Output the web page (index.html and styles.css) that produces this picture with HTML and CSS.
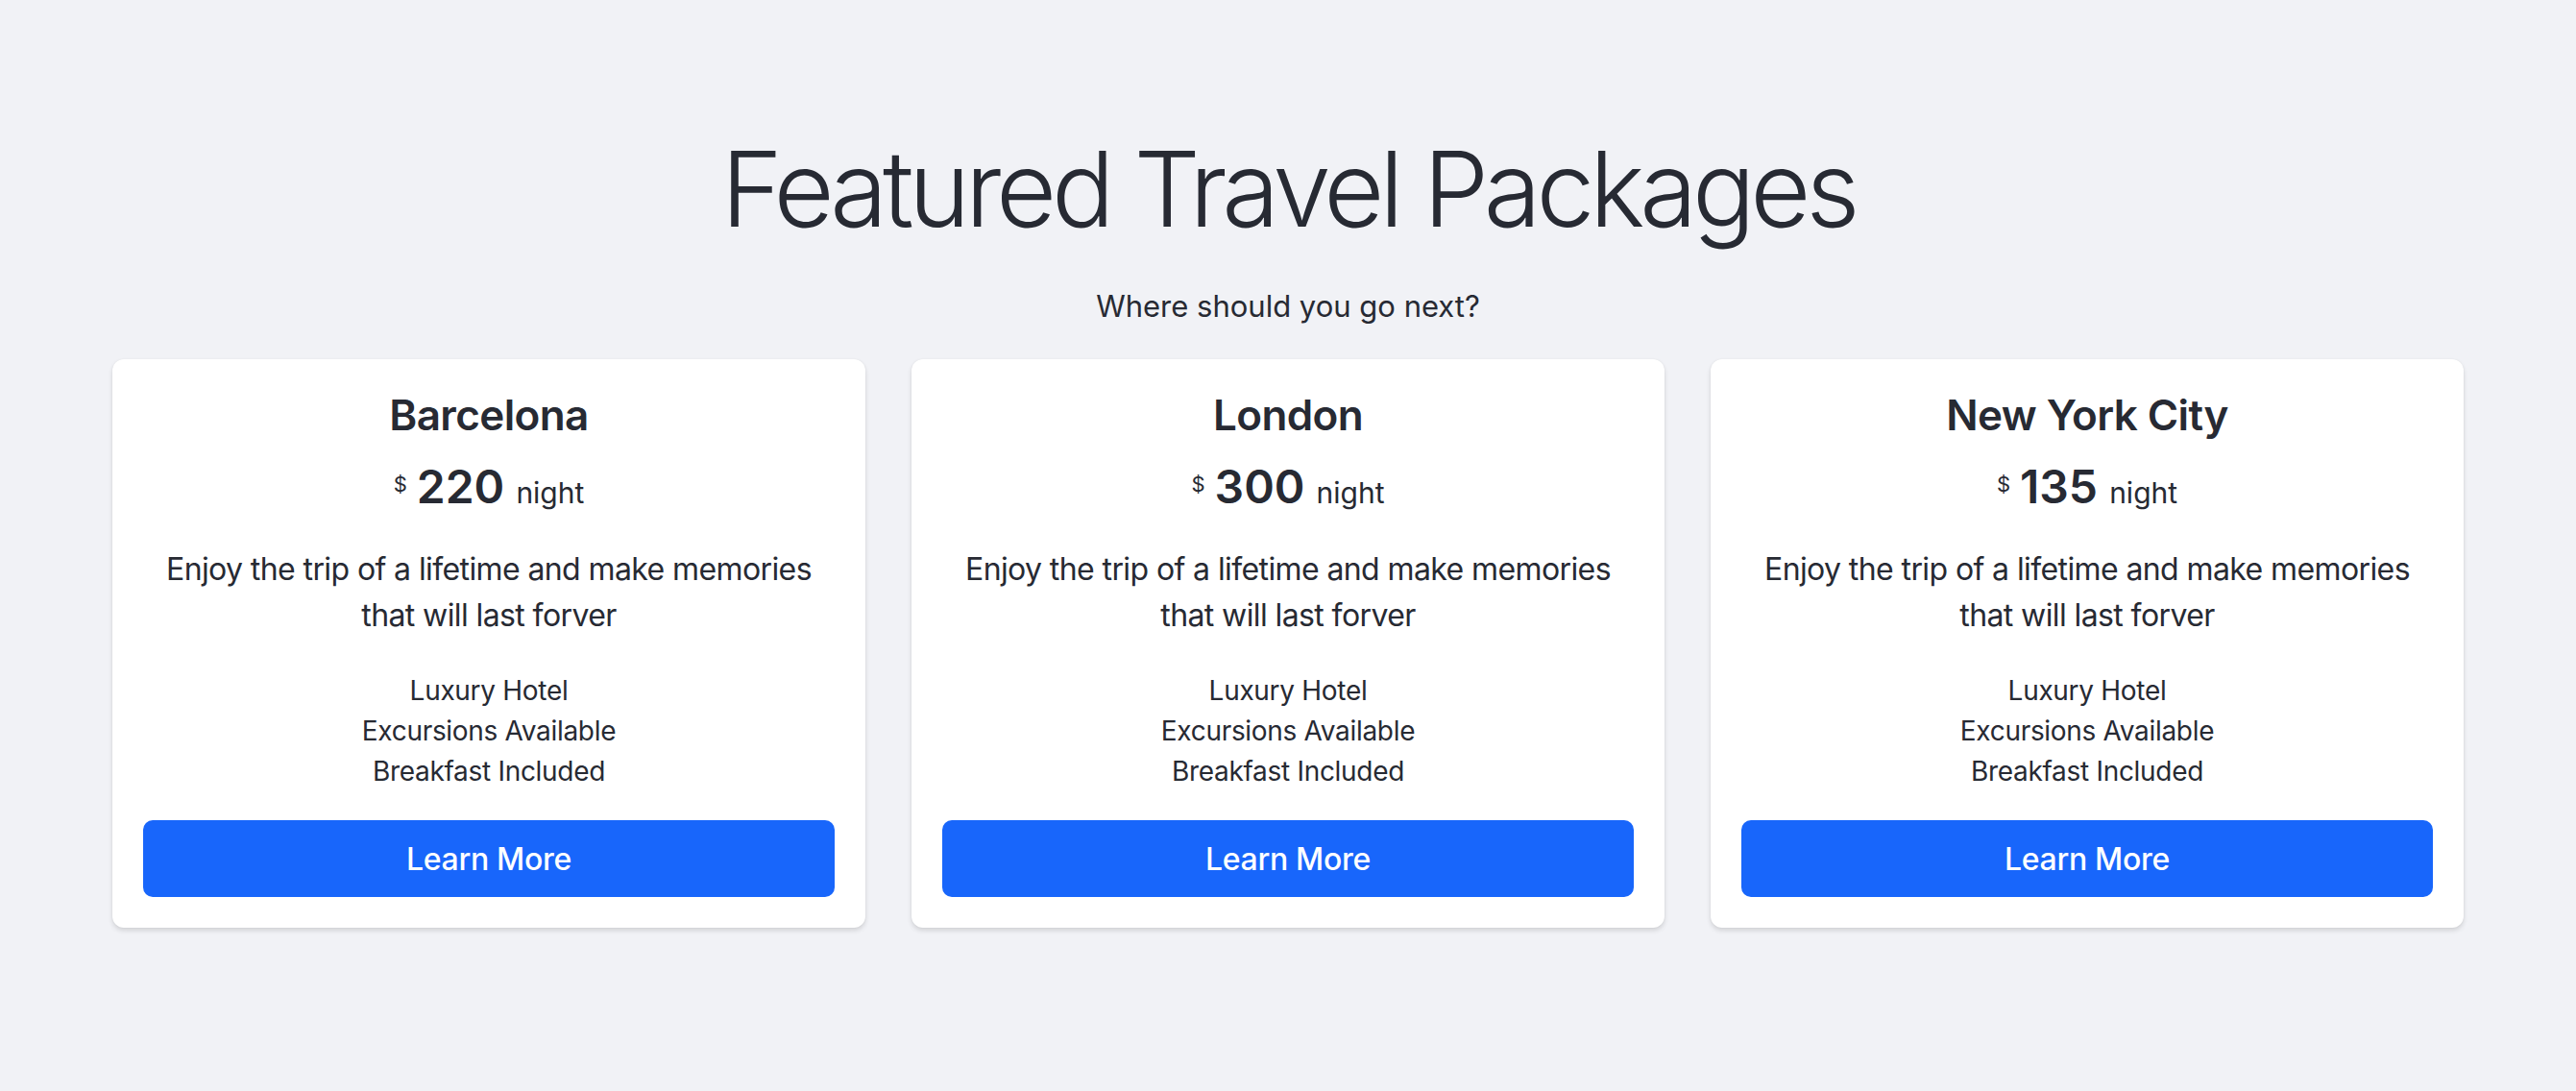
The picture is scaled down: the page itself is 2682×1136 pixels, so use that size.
FILE: index.html
```html
<!DOCTYPE html>
<html lang="en">
<head>
<meta charset="utf-8">
<title>Featured Travel Packages</title>
<link rel="stylesheet" href="styles.css">
</head>
<body>
<main class="page">
  <header class="intro">
    <h1 class="title">Featured Travel Packages</h1>
    <p class="lead">Where should you go next?</p>
  </header>
  <section class="cards">
    <article class="card">
      <h2 class="card-title">Barcelona</h2>
      <p class="price"><span class="cur">$</span>220 <span class="unit">night</span></p>
      <p class="desc">Enjoy the trip of a lifetime and make memories that will last forver</p>
      <ul class="features">
        <li>Luxury Hotel</li>
        <li>Excursions Available</li>
        <li>Breakfast Included</li>
      </ul>
      <button class="btn" type="button">Learn More</button>
    </article>
    <article class="card">
      <h2 class="card-title">London</h2>
      <p class="price"><span class="cur">$</span>300 <span class="unit">night</span></p>
      <p class="desc">Enjoy the trip of a lifetime and make memories that will last forver</p>
      <ul class="features">
        <li>Luxury Hotel</li>
        <li>Excursions Available</li>
        <li>Breakfast Included</li>
      </ul>
      <button class="btn" type="button">Learn More</button>
    </article>
    <article class="card">
      <h2 class="card-title">New York City</h2>
      <p class="price"><span class="cur">$</span>135 <span class="unit">night</span></p>
      <p class="desc">Enjoy the trip of a lifetime and make memories that will last forver</p>
      <ul class="features">
        <li>Luxury Hotel</li>
        <li>Excursions Available</li>
        <li>Breakfast Included</li>
      </ul>
      <button class="btn" type="button">Learn More</button>
    </article>
  </section>
</main>
</body>
</html>
```
FILE: styles.css
```css
* { box-sizing: border-box; }
html, body {
  margin: 0;
  padding: 0;
  background: #f1f2f6;
}
body {
  font-family: Inter, "Noto Sans", "Liberation Sans", sans-serif;
  color: #272a33;
  min-height: 1136px;
}
.page {
  width: 2448px;
  margin: 0 auto;
  padding-top: 131px;
}
.intro { text-align: center; }
.title {
  margin: 0;
  font-size: 109px;
  line-height: 131px;
  font-weight: 300;
  letter-spacing: -5.3px;
}
.lead {
  margin: 34px 0 0;
  font-size: 31px;
  line-height: 46px;
  font-weight: 400;
}
.cards {
  display: grid;
  grid-template-columns: repeat(3, 1fr);
  gap: 48px;
  margin-top: 32px;
}
.card {
  background: #fff;
  border-radius: 12px;
  box-shadow: 0 3px 5px rgba(0, 0, 0, 0.13), 0 0 2px rgba(0, 0, 0, 0.06);
  padding: 32px;
  text-align: center;
  display: flex;
  flex-direction: column;
}
.card-title {
  margin: 0;
  font-size: 44px;
  line-height: 53px;
  font-weight: 600;
  letter-spacing: -0.6px;
}
.price {
  margin: 16px 0 0;
  font-size: 48px;
  line-height: 58px;
  font-weight: 600;
}
.cur {
  font-size: 22px;
  font-weight: 400;
  vertical-align: 12px;
  margin-right: 10px;
}
.unit {
  font-size: 30px;
  font-weight: 400;
}
.desc {
  margin: 27px 0 0;
  padding: 0 18px;
  font-size: 32px;
  line-height: 48px;
  letter-spacing: -0.6px;
}
.features {
  list-style: none;
  margin: 33px 0 0;
  padding: 0;
  font-size: 28px;
  line-height: 42px;
  letter-spacing: -0.3px;
}
.btn {
  margin-top: 30px;
  height: 80px;
  width: 100%;
  border: 0;
  border-radius: 10px;
  background: #1866fb;
  color: #fff;
  font-family: inherit;
  font-size: 32px;
  font-weight: 500;
  letter-spacing: -0.3px;
  cursor: pointer;
}
```
